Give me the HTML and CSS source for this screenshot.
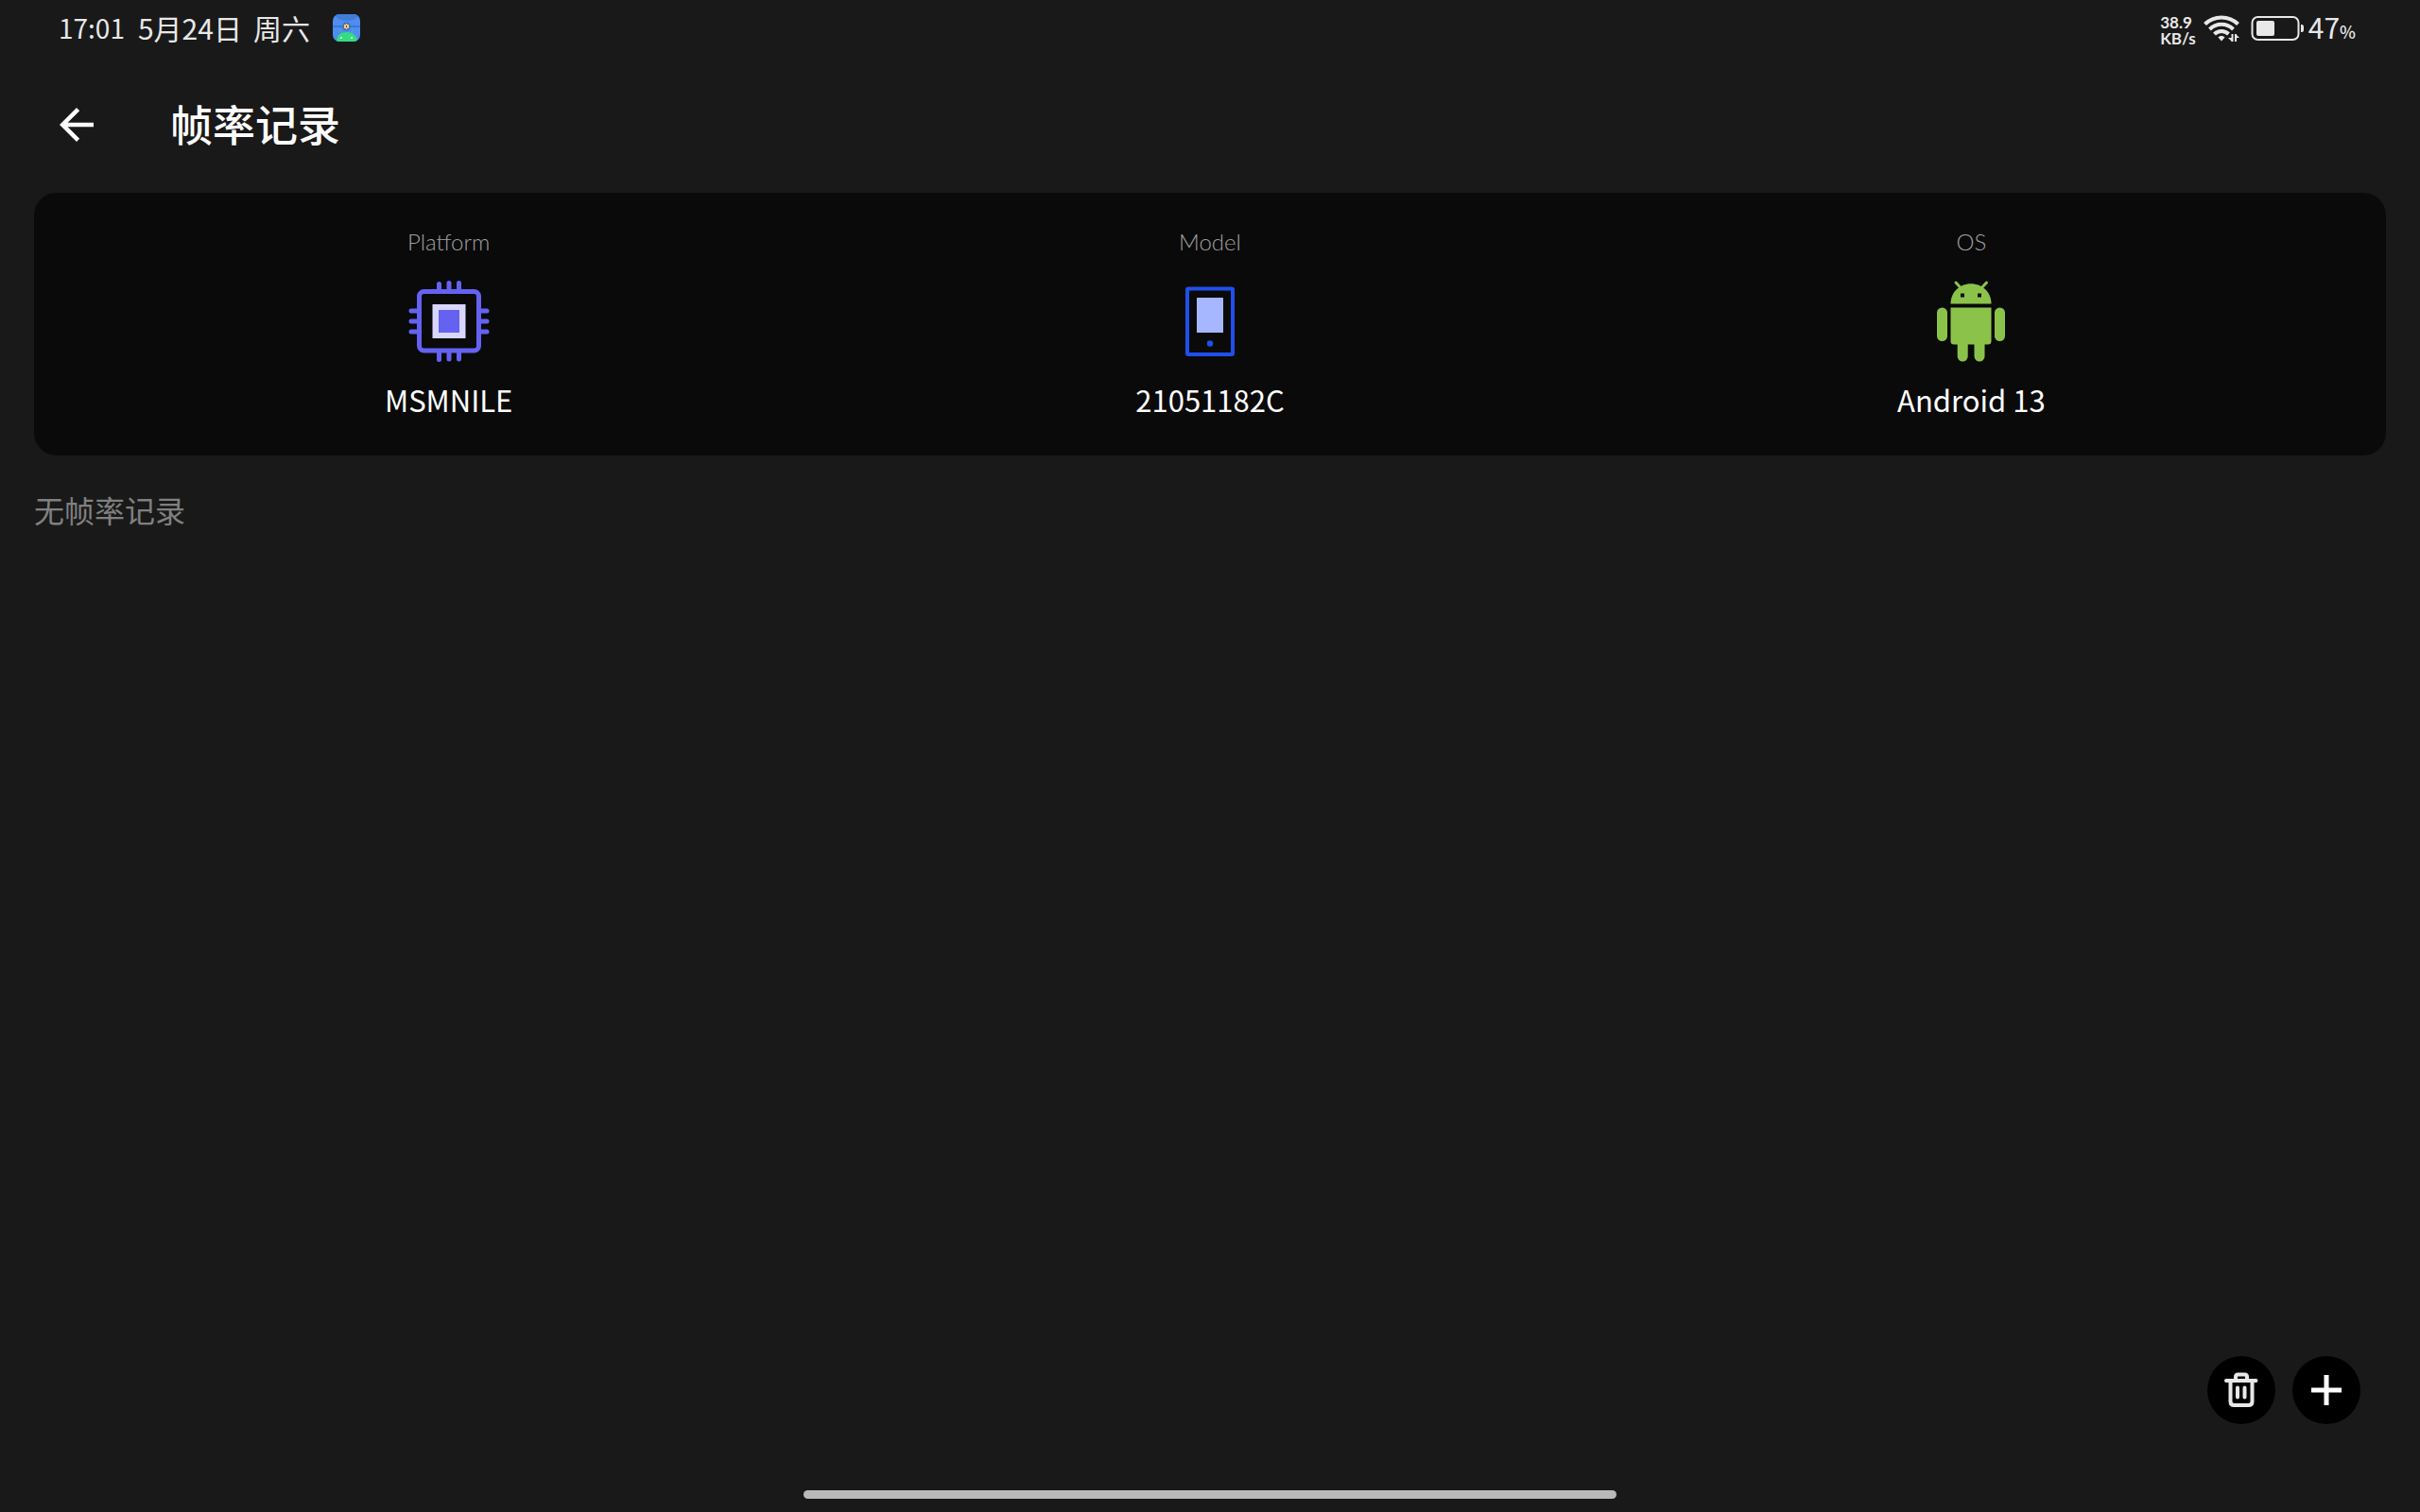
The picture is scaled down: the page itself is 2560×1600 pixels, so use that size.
FILE: index.html
```html
<!DOCTYPE html>
<html lang="zh-CN">
<head>
<meta charset="utf-8">
<meta name="viewport" content="width=device-width, initial-scale=1">
<title>帧率记录</title>
<link rel="stylesheet" href="styles.css">
</head>
<body>
<div class="status-bar">
  <div class="status-left">
    <span class="clock">17:01</span>
    <span class="date"><span>5月24日</span><span>周六</span></span>
    <svg class="app-badge" viewBox="0 0 29 29" aria-hidden="true">
      <defs><clipPath id="badge"><rect width="29" height="29" rx="7"/></clipPath></defs>
      <g clip-path="url(#badge)">
        <rect width="29" height="29" fill="#4f8df0"/>
        <path d="M2 0h26c-2 5-7 7-13 7S4 5 2 0z" fill="#437bd8"/>
        <path d="M0 12h29v2H0z" fill="#3f76d2"/>
        <circle cx="14.500" cy="13" r="4.500" fill="#4474b8"/>
        <path d="M7 16l3 5M22 16l-3 5" stroke="#3bbf9a" stroke-width="1"/>
        <path d="M4 29c0-6 4-10 10.500-10S26 23 26 29z" fill="#35dc82"/>
        <rect x="12" y="11" width="5" height="4" fill="#f0cf74"/>
        <path d="M14.500 10v6" stroke="#f0cf74" stroke-width="1"/>
        <path d="M14.500 12v2" stroke="#54502f" stroke-width="1"/>
        <circle cx="9" cy="25" r="1" fill="#fff"/><circle cx="20" cy="25" r="1" fill="#fff"/>
      </g>
    </svg>
  </div>
  <div class="status-right">
    <span class="net-speed"><span>38.9</span><span>KB/s</span></span>
    <svg class="wifi" viewBox="0 0 38 30" role="img" aria-label="Wi-Fi">
      <g fill="none" stroke="#e8e8e8" stroke-width="4">
        <path d="M1.500 10.500C11 1 27 1 36.500 10.500"/>
        <path d="M6.500 16C13.500 9 24.500 9 31.500 16"/>
        <path d="M11.500 21.200C15.500 17 22.500 17 26.500 21.200"/>
      </g>
      <path d="M15.500 24.500c2-2 5-2 7 0L19 28.500z" fill="#e8e8e8"/>
      <path d="M27 20h11v10H26z" fill="#191919"/>
      <path d="M30.500 21v8M34 21v8" stroke="#e8e8e8" stroke-width="2"/>
      <path d="M30 29l-4-4h4zM34 21l4 4h-4z" fill="#e8e8e8"/>
    </svg>
    <svg class="battery" viewBox="0 0 57 26" role="img" aria-label="电量">
      <rect x="1.500" y="1" width="49" height="24" rx="6" fill="none" stroke="#e8e8e8" stroke-width="2"/>
      <rect x="6" y="5" width="19" height="16" rx="2" fill="#e8e8e8"/>
      <path d="M53 9c3 0 3 1 3 4s0 4-3 4z" fill="#e8e8e8"/>
    </svg>
    <span class="level">47<small>%</small></span>
  </div>
</div>

<header class="top-bar">
  <button class="back" type="button" aria-label="返回">
    <svg viewBox="0 0 24 24"><path fill="#fff" d="M20 11H7.830l5.590-5.590L12 4l-8 8 8 8 1.410-1.410L7.830 13H20v-2z"/></svg>
  </button>
  <h1>帧率记录</h1>
</header>

<main>
  <section class="device-card">
    <div class="spec">
      <span class="spec-label">Platform</span>
      <svg class="spec-icon" viewBox="0 0 88 88" aria-hidden="true">
        <g fill="none" stroke="#6562f2" stroke-width="5">
          <rect x="12.500" y="12.500" width="63" height="62.500" rx="5"/>
          <path stroke-linecap="round" d="M33.500 11V4.500M44 11V3.500M54.500 11V3.500M33.500 77v7.500M44 77v7M54.500 77v7M11 33H4M11 44H4M11 55H4M77 33h7M77 44h7M77 55h7"/>
        </g>
        <rect x="26.500" y="26" width="35" height="36" fill="#d9d7ff"/>
        <rect x="33" y="32" width="22" height="24" fill="#6562f2"/>
      </svg>
      <span class="spec-value">MSMNILE</span>
    </div>
    <div class="spec">
      <span class="spec-label">Model</span>
      <svg class="spec-icon" viewBox="0 0 88 88" aria-hidden="true">
        <rect x="20" y="9.500" width="48" height="69.500" rx="1" fill="none" stroke="#2050eb" stroke-width="4"/>
        <rect x="30" y="19" width="28" height="37" fill="#a6b7ff"/>
        <circle cx="44" cy="67.500" r="3.200" fill="#2050eb"/>
      </svg>
      <span class="spec-value">21051182C</span>
    </div>
    <div class="spec">
      <span class="spec-label">OS</span>
      <svg class="spec-icon" viewBox="0 0 88 88" aria-hidden="true">
        <g fill="#8bc34a">
          <path d="M22.500 25.500C22.500 13 32 4.200 44 4.200S65.500 13 65.500 25.500z"/>
          <path d="M22.500 29.500h43V65a3.500 3.500 0 0 1-3.500 3.500H26A3.500 3.500 0 0 1 22.500 65z"/>
          <rect x="8" y="29.500" width="11" height="35.500" rx="5.500"/>
          <rect x="69" y="29.500" width="11" height="35.500" rx="5.500"/>
          <path d="M29.700 65h11v16a5.500 5.500 0 0 1-11 0zM47.500 65h11v16a5.500 5.500 0 0 1-11 0z"/>
        </g>
        <path d="M28 3l6 6.500M60.500 3l-6 6.500" stroke="#8bc34a" stroke-width="3" stroke-linecap="round"/>
        <path d="M33 14.500h4v4h-4zM51 14.500h4v4h-4z" fill="#0a0a0a"/>
      </svg>
      <span class="spec-value">Android 13</span>
    </div>
  </section>
  <p class="empty">无帧率记录</p>
</main>

<div class="actions">
  <button type="button" aria-label="删除">
    <svg viewBox="0 0 72 72" fill="none" stroke="#e8e8e8" stroke-width="4" stroke-linecap="round" stroke-linejoin="round">
      <path d="M20 26h31.500M24.500 27v21q0 4 4 4h15q4 0 4-4V27"/>
      <path d="M30 25v-3q0-2.500 2.500-2.500h7q2.500 0 2.500 2.500v3M32 33.500v10M39.500 33.500v10"/>
    </svg>
  </button>
  <button type="button" aria-label="添加">
    <svg viewBox="0 0 72 72" stroke="#fff" stroke-width="5"><path d="M20 36h32M36 20v32"/></svg>
  </button>
</div>
<div class="home-indicator"></div>
</body>
</html>
```
FILE: styles.css
```css
* {
  box-sizing: border-box;
}

body {
  margin: 0;
  min-height: 100vh;
  display: flex;
  flex-direction: column;
  background: #191919;
  color: #fff;
  font-family: "Noto Sans CJK SC", "Noto Sans", sans-serif;
}

button {
  border: 0;
  padding: 0;
  background: none;
}

svg {
  display: block;
}

.status-bar {
  display: flex;
  justify-content: space-between;
  align-items: center;
  height: 60px;
  padding: 0 68px 0 62px;
  color: #e8e8e8;
  font-size: 30px;
  line-height: 56px;
}

.status-left,
.status-right {
  display: flex;
  align-items: center;
}

.status-left {
  padding-bottom: 2px;
}

.clock {
  margin-right: 14px;
  font-size: 28px;
}

.date {
  display: flex;
  gap: 12px;
}

.app-badge {
  width: 29px;
  height: 29px;
  margin-left: 24px;
}

.net-speed {
  display: flex;
  flex-direction: column;
  margin-right: 8px;
  padding-top: 3px;
  font: bold 17px/17px "Lato", sans-serif;
}

.wifi {
  width: 38px;
  height: 30px;
  margin-right: 12px;
}

.battery {
  width: 57px;
  height: 26px;
  margin-right: 4px;
}

.level small {
  font-size: 18px;
  font-weight: 500;
}

.top-bar {
  display: flex;
  align-items: center;
  gap: 72px;
  height: 144px;
  padding: 0 54px;
}

.back svg {
  width: 54px;
  height: 54px;
}

h1 {
  margin: 0;
  padding-bottom: 3px;
  font-size: 45px;
  font-weight: 500;
  line-height: 60px;
}

main {
  flex: 1;
  padding: 0 36px;
}

.device-card {
  display: grid;
  grid-template-columns: repeat(3, 1fr);
  padding: 36px;
  border-radius: 24px;
  background: #0a0a0a;
}

.spec {
  display: flex;
  flex-direction: column;
  align-items: center;
}

.spec-label {
  color: #a0a0a0;
  font: 300 24px/32px "Lato", sans-serif;
}

.spec-icon {
  width: 88px;
  height: 88px;
  margin: 24px 0 16px;
}

.spec-value {
  font-size: 31px;
  line-height: 46px;
}

.empty {
  margin: 33px 0 0;
  color: #808080;
  font-size: 32px;
  line-height: 48px;
}

.actions {
  display: flex;
  justify-content: flex-end;
  gap: 18px;
  padding: 0 63px 70px;
}

.actions button {
  width: 72px;
  height: 72px;
  border-radius: 50%;
  background: #000;
}

.home-indicator {
  align-self: center;
  width: 34%;
  max-width: 860px;
  height: 9px;
  margin-bottom: 14px;
  border-radius: 5px;
  background: #bababa;
}
```
